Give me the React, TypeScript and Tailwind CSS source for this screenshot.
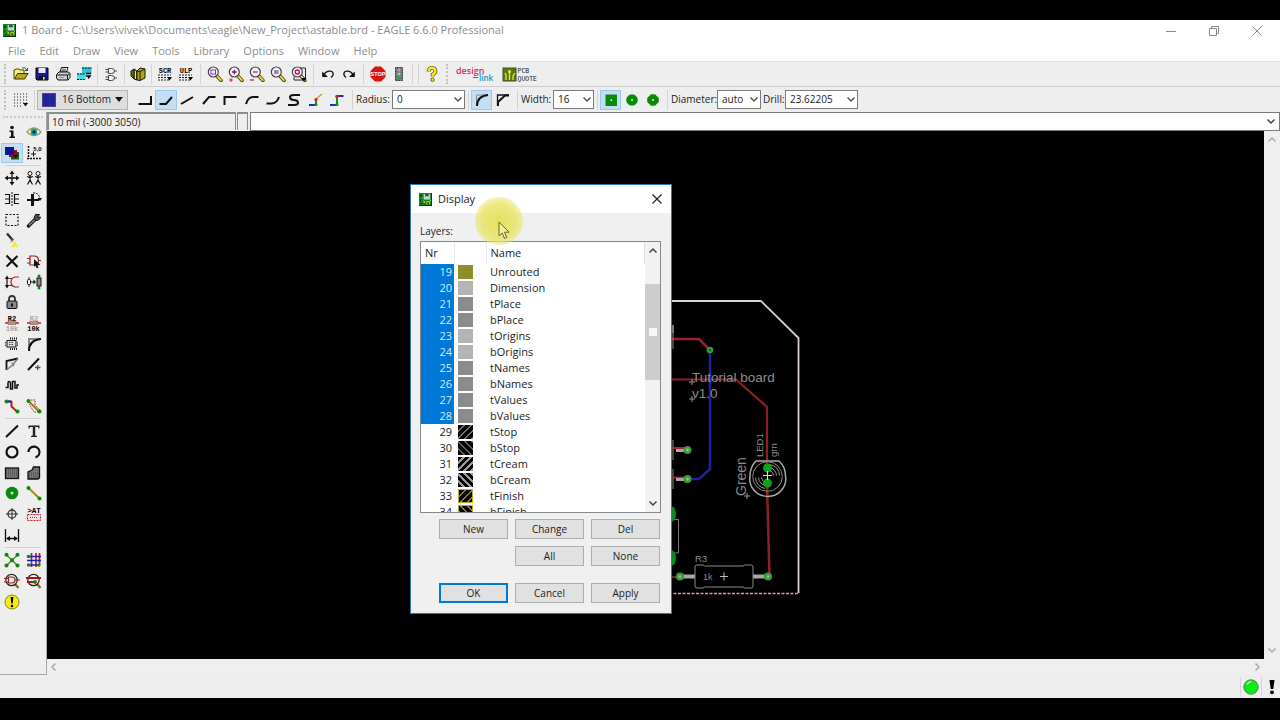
import React from "react";

type IconDef = React.ReactNode;

const INK = "#111111";
const GREEN = "#0a8a0a";

const Magnifier = ({ children }: { children?: React.ReactNode }) => (
  <>
    <path d="M9.500 9.500L14 14.500" stroke="#5a4a00" strokeWidth="3.400" strokeLinecap="round" />
    <path d="M10 10L13.800 14.200" stroke="#f0e040" strokeWidth="1.800" strokeLinecap="round" />
    <circle cx="6.300" cy="6" r="5" fill="#f3f0fa" stroke="#45424f" strokeWidth="1.200" />
    {children}
  </>
);

const icons: Record<string, IconDef> = {
  open: (
    <>
      <path d="M1 13V4h1l1-1h3l1 1h4v3" fill="#f5ec7a" stroke="#4a4200" />
      <path d="M1.500 13L4.500 7.500H15L11.500 13Z" fill="#b5a81c" stroke="#3a3400" />
      <path d="M9 2.500c2-1.500 4-.5 4.500 1.500M14.500 2v2.500h-2.500" fill="none" stroke={INK} strokeWidth=".8" />
    </>
  ),
  save: (
    <>
      <path d="M2 2h12v12H3l-1-1Z" fill="#1a1a9a" stroke="#000" />
      <path d="M4.500 2h7v5h-7Z" fill="#e8e8f4" />
      <path d="M5 10h6.500v4H5Z" fill="#111" />
      <path d="M9 11h1.500v2.500H9Z" fill="#fff" />
    </>
  ),
  print: (
    <>
      <path d="M5 6L6.500 1.500H13L11.500 6Z" fill="#fff" stroke={INK} />
      <path d="M7 3.200h4M6.500 4.700h4" stroke={INK} strokeWidth=".7" />
      <path d="M1.500 8.500L4 6h9.500l1.500 1.500v4l-2 2.500H3L1.500 12Z" fill="#d0d0d0" stroke={INK} />
      <path d="M1.500 9h11v4.500M12.500 9l2-1.500" fill="none" stroke={INK} />
      <path d="M4 11.500h5" stroke="#b8a800" />
    </>
  ),
  cam: (
    <>
      <path d="M6 1.500h9.500v6.500H6Z" fill="#28c4d4" />
      <path d="M1 7.500h9v6H1Z" fill="#40e0ec" />
      <path d="M6 2h9.500M1 8h8M1 13.500h8" stroke="#000" strokeDasharray="2 .8" strokeWidth="1.200" />
      <path d="M10 7.500h5M10 10h4l-2 2.500" fill="none" stroke="#000" strokeWidth="1.500" />
    </>
  ),
  gate: (
    <>
      <path d="M5.500 2.500h3q3 0 3 2.500t-3 2.500h-3ZM5.500 9.500h3q3 0 3 2.500t-3 2.500h-3Z" fill="#f4f4f4" stroke="#444" />
      <path d="M2.500 3.500h3M2.500 6h3M2.500 11h3M2.500 13.500h3M11.500 5h2.500M11.500 12h2.500" stroke="#444" />
    </>
  ),
  books: (
    <>
      <path d="M1 5l3-2 3 2v9l-3-1-3-3Z" fill="#6a6420" stroke="#1a1a00" />
      <path d="M7 5l3-3 5 1v9l-5 2.500-3-.5Z" fill="#b0a224" stroke="#1a1a00" />
      <path d="M4 4v9M10 5v9M7 5l3 .5L15 3" fill="none" stroke="#1a1a00" />
      <path d="M5.500 5v8" stroke="#f0e878" />
    </>
  ),
  scr: (
    <>
      <text x="8" y="6.500" textAnchor="middle" fontSize="7" fontWeight="700" fontFamily="Liberation Mono, monospace">SCR</text>
      <path d="M1 9h13M1 11.500h9M1 14h11" stroke="#222" strokeDasharray="2 1" />
      <path d="M10 11h5l-2.500 3.500Z" fill="#000" />
    </>
  ),
  ulp: (
    <>
      <text x="8" y="6.500" textAnchor="middle" fontSize="7" fontWeight="700" fontFamily="Liberation Mono, monospace">ULP</text>
      <path d="M1 9h13M1 11.500h9M1 14h11" stroke="#222" strokeDasharray="2 1" />
      <path d="M10 11h5l-2.500 3.500Z" fill="#000" />
    </>
  ),
  zoomFit: <Magnifier><rect x="4" y="4" width="4.500" height="4" fill="none" stroke="#8a30c0" /></Magnifier>,
  zoomIn: <Magnifier><path d="M4 6h4.600M6.300 3.700v4.600" stroke="#8a1060" strokeWidth="1.300" /><path d="M1 14h4M3 12v4" stroke="#c02060" /></Magnifier>,
  zoomOut: <Magnifier><path d="M4 6h4.600" stroke="#c02060" strokeWidth="1.300" /><path d="M1 14h4" stroke="#c02060" strokeWidth="1.300" /></Magnifier>,
  zoomRedraw: <Magnifier><path d="M4 5h4.600M4 7h4.600" stroke="#333" /></Magnifier>,
  zoomSelect: (
    <>
      <path d="M9 2h5.500v12H3V11" fill="none" stroke="#222" />
      <Magnifier><circle cx="6.300" cy="6" r="2" fill="none" stroke="#c01040" strokeWidth="1.300" /></Magnifier>
      <path d="M10.500 12h5L13 15.500Z" fill="#000" />
    </>
  ),
  undo: (
    <>
      <path d="M4 9C6 4.500 12 4 13 7c.6 2-.6 3.500-2 4.500" fill="none" stroke={INK} strokeWidth="1.300" />
      <path d="M2.200 5.500V11H8Z" fill={INK} />
    </>
  ),
  redo: (
    <>
      <path d="M12 9C10 4.500 4 4 3 7c-.6 2 .6 3.500 2 4.500" fill="none" stroke={INK} strokeWidth="1.300" />
      <path d="M13.800 5.500V11H8Z" fill={INK} />
    </>
  ),
  stop: (
    <>
      <path d="M5 .5h6L15.500 5v6L11 15.500H5L.5 11V5Z" fill="#e01010" />
      <text x="8" y="10.300" textAnchor="middle" fontSize="5.500" fontWeight="700" fill="#fff" fontFamily="Liberation Sans, sans-serif">STOP</text>
    </>
  ),
  traffic: (
    <>
      <rect x="4.500" y="1.500" width="7" height="13" fill="#777" stroke="#222" strokeDasharray="1 .6" />
      <circle cx="8" cy="4" r="1.600" fill="#aaa" />
      <circle cx="8" cy="8" r="1.600" fill="#bbb" />
      <circle cx="8" cy="12" r="1.800" fill="#1cae3c" />
    </>
  ),
  help: (
    <>
      <path d="M4.500 5.500Q4.500 2 8 2t3.500 3.200Q11.500 7 8.600 8.500V10.500" fill="none" stroke="#3a3400" strokeWidth="3.600" />
      <path d="M4.500 5.500Q4.500 2 8 2t3.500 3.200Q11.500 7 8.600 8.500V10.500" fill="none" stroke="#f6ec20" strokeWidth="2.400" />
      <circle cx="8.500" cy="13.700" r="1.700" fill="#f6ec20" stroke="#3a3400" strokeWidth=".8" />
    </>
  ),
  grid: (
    <>
      <path d="M1 2h13M1 5h13M1 8h13M1 11h13M1 14h9" stroke="#222" strokeDasharray="1 2" />
      <path d="M10 11h5l-2.500 3.500Z" fill="#000" />
    </>
  ),
  bend0: <path d="M1.500 12H14V4" fill="none" stroke={INK} strokeWidth="2" />,
  bend1: <path d="M1.500 12H8L14 5" fill="none" stroke={INK} strokeWidth="2" />,
  bend2: <path d="M2 12L14 5" fill="none" stroke={INK} strokeWidth="2" />,
  bend3: <path d="M2 12L8 5H14.500" fill="none" stroke={INK} strokeWidth="2" />,
  bend4: <path d="M2.500 13V5H14.500" fill="none" stroke={INK} strokeWidth="2" />,
  bend5: <path d="M2 12Q4 5 9 5H14.500" fill="none" stroke={INK} strokeWidth="2" />,
  bend6: <path d="M1.500 11.500H7Q12 11 14 5" fill="none" stroke={INK} strokeWidth="2" />,
  bend7: <path d="M14 3H8Q3.500 3 4 5.500T8 8t4 2.500T8 13H2" fill="none" stroke={INK} strokeWidth="2" />,
  bend8: (
    <>
      <path d="M1 13H7" stroke="#1830c0" strokeWidth="2" />
      <path d="M8 13V7" stroke="#109020" strokeWidth="2" />
      <path d="M8 7L14 2" stroke="#d0a030" strokeWidth="1.600" />
      <circle cx="8" cy="7.500" r="1.600" fill="#d02020" />
      <circle cx="8" cy="12.500" r="1.600" fill="#109020" />
    </>
  ),
  bend9: (
    <>
      <path d="M1 13H8" stroke="#1830c0" strokeWidth="2" />
      <path d="M8 13V4" stroke="#109020" strokeWidth="2" />
      <path d="M8 4H14.500" stroke="#1830c0" strokeWidth="2" />
      <circle cx="8" cy="4.500" r="1.800" fill="#d02020" />
      <circle cx="8" cy="12.500" r="1.600" fill="#109020" />
    </>
  ),
  miterRound: (
    <>
      <path d="M2.500 14V3H14" fill="none" stroke="#888" />
      <path d="M3 14Q3 4 14 3" fill="none" stroke={INK} strokeWidth="2" />
    </>
  ),
  miterFlat: (
    <>
      <path d="M2.500 14V3H14" fill="none" stroke={INK} strokeWidth="1.300" />
      <path d="M3 14V10L10 3.500H14" fill="none" stroke={INK} strokeWidth="2" />
    </>
  ),
  viaSquare: (
    <>
      <rect x="2.500" y="2.500" width="11.500" height="11.500" fill={GREEN} />
      <rect x="7.500" y="7.500" width="1.500" height="1.500" fill="#fff" />
    </>
  ),
  viaRound: (
    <>
      <circle cx="8" cy="8" r="5.800" fill={GREEN} />
      <rect x="7.200" y="7.200" width="1.600" height="1.600" fill="#fff" />
    </>
  ),
  viaOct: (
    <>
      <path d="M6 2.200h4L13.800 6v4L10 13.800H6L2.200 10V6Z" fill={GREEN} />
      <rect x="7.200" y="7.200" width="1.600" height="1.600" fill="#fff" />
    </>
  ),
  info: (
    <>
      <circle cx="8" cy="3.500" r="1.800" fill={INK} />
      <path d="M5.500 6.500H9.500V12.500H11V14H5.500V12.500H7V8H5.500Z" fill={INK} />
    </>
  ),
  eye: (
    <>
      <path d="M1 8Q8 0 15 8Q8 15 1 8Z" fill="#fff" stroke="#a89a50" strokeWidth="1.400" />
      <circle cx="8" cy="8" r="3.400" fill="#10a0a8" />
      <circle cx="8" cy="8" r="1.500" fill="#002030" />
    </>
  ),
  display: (
    <>
      <path d="M7 7h8v7.500H7Z" fill="#0e5a24" />
      <path d="M5 5h8v7H5Z" fill="#8a1414" />
      <path d="M1 2h9v8H1Z" fill="#14148c" />
      <path d="M9 10h5l-2.500 3Z" fill="#200" />
    </>
  ),
  mark: (
    <>
      <path d="M2.500 1v13M1 13.500h14" stroke={INK} strokeDasharray="2 1" strokeWidth="1.500" />
      <path d="M5 9h5M7.500 6.500v5" stroke={INK} />
      <text x="11.500" y="6" textAnchor="middle" fontSize="6" fontWeight="700" fontFamily="Liberation Sans, sans-serif">5,0</text>
    </>
  ),
  move: (
    <>
      <path d="M8 2v12M2 8h12" stroke={INK} strokeWidth="1.300" />
      <path d="M8 .5L10.500 4h-5ZM8 15.500L5.500 12h5ZM.5 8L4 5.500v5ZM15.500 8L12 10.500v-5Z" fill={INK} />
    </>
  ),
  copy: (
    <>
      <path d="M4 6v4M1 6.500l3 1 3-1M4 10l-2.500 4.500M4 10l2.500 4.500M12 6v4M9 6.500l3 1 3-1M12 10l-2.500 4.500M12 10l2.500 4.500" fill="none" stroke={INK} strokeWidth="1.200" />
      <circle cx="4" cy="3.500" r="2" fill="#fff" stroke={INK} />
      <circle cx="12" cy="3.500" r="2" fill="#fff" stroke={INK} />
    </>
  ),
  mirror: (
    <>
      <path d="M8 1v14" stroke={INK} strokeDasharray="2 1" />
      <path d="M1 3.500h4.500v9H1M1 8h4.500M15 3.500h-4.500v9H15M15 8h-4.500" fill="none" stroke={INK} strokeWidth="1.200" />
    </>
  ),
  rotate: (
    <>
      <path d="M6.500 3v12" stroke={INK} strokeWidth="3" />
      <path d="M1 9h12" stroke={INK} strokeWidth="2" />
      <path d="M7 2Q13 1.500 14 8" fill="none" stroke={INK} strokeDasharray="2 1" />
      <path d="M11.500 7h4.500l-2 3Z" fill={INK} />
    </>
  ),
  group: <rect x="2" y="2.500" width="12" height="11" fill="none" stroke={INK} strokeDasharray="2 1.500" strokeWidth="1.200" />,
  wrench: (
    <>
      <path d="M2.500 14L9 7.500" stroke={INK} strokeWidth="3.400" strokeLinecap="round" />
      <path d="M2.800 13.600L9 7.500" stroke="#888" strokeWidth="1.400" />
      <path d="M13.500 2.500L11.500 5.500L14.500 5Q13.500 9 9.500 8.500Q7 5.500 9.500 2.500Z" fill="#555" stroke={INK} />
    </>
  ),
  brush: (
    <>
      <path d="M3 1.500L9 8.500" stroke="#333" strokeWidth="2.400" />
      <path d="M8.500 7L11 9.500L14.500 15H6.500L9 12Z" fill="#f2ea40" />
      <path d="M6.500 10L10 7" stroke="#555" />
    </>
  ),
  del: <path d="M2.500 2.500L13.500 14M13.500 3L2.500 13.500" stroke={INK} strokeWidth="2.200" />,
  add: (
    <>
      <path d="M4 3h4q4.500 0 4.500 4.500T8 12H4ZM1 5.500h3M1 10h3M12 7.500h3" fill="none" stroke="#902020" strokeWidth="1.200" />
      <path d="M8 6l6.500 6-3 .3 1 3-2-.3-1-2.500L8 14Z" fill={INK} />
    </>
  ),
  pinswap: (
    <>
      <path d="M15 3H11Q7 4 7 8t4 5h4M5 4.500h4M5 11.500h4" fill="none" stroke="#a02020" strokeWidth="1.200" />
      <path d="M3 4v8" stroke={INK} strokeWidth="1.200" />
      <path d="M3 1.500L5.200 5H.8ZM3 14.500L.8 11h4.400Z" fill={INK} />
    </>
  ),
  replace: (
    <>
      <path d="M3 3v10M13 2v12" stroke="#333" />
      <rect x="1.500" y="5.500" width="3" height="5" rx="1" fill="#fff" stroke={INK} />
      <rect x="11" y="4" width="4" height="8" fill="#8a8a8a" stroke={INK} />
      <path d="M5 8h3" stroke={GREEN} strokeWidth="1.500" />
      <path d="M7.500 5.500v5L10 8Z" fill={INK} />
      <circle cx="13" cy="2" r="1.500" fill={GREEN} />
      <circle cx="13" cy="14" r="1.500" fill={GREEN} />
    </>
  ),
  lock: (
    <>
      <path d="M5 8V5q0-3 3-3t3 3v3" fill="none" stroke="#333" strokeWidth="1.800" />
      <rect x="3" y="7" width="10" height="7.500" rx="1" fill="#888" stroke={INK} />
      <path d="M8 9.500v3" stroke="#000" strokeWidth="1.800" />
    </>
  ),
  name: (
    <>
      <text x="8" y="6" textAnchor="middle" fontSize="7" fontWeight="700" fontFamily="Liberation Mono, monospace">R2</text>
      <path d="M1 8h14" stroke="#c02030" strokeWidth="1.500" />
      <rect x="4" y="6.700" width="8" height="2.800" fill="#999" stroke="#a03030" strokeWidth=".5" />
      <text x="8" y="15.500" textAnchor="middle" fontSize="7" fill="#888" fontFamily="Liberation Mono, monospace">10k</text>
    </>
  ),
  value: (
    <>
      <text x="8" y="6" textAnchor="middle" fontSize="7" fill="#888" fontFamily="Liberation Mono, monospace">R2</text>
      <path d="M1 8h14" stroke="#c02030" strokeWidth="1.500" />
      <rect x="4" y="6.700" width="8" height="2.800" fill="#999" stroke="#a03030" strokeWidth=".5" />
      <text x="7.500" y="15.500" textAnchor="middle" fontSize="7" fontWeight="700" fontFamily="Liberation Mono, monospace">10k</text>
    </>
  ),
  smash: (
    <>
      <rect x="3" y="4.500" width="9" height="6.500" fill="#ddd" stroke={INK} />
      <path d="M6 2.500h7M6 13h7" stroke={INK} strokeWidth="2" strokeDasharray="1 1" />
      <path d="M5 6.500h5M5 8.500h5M1.500 6v4M13.500 6v4" stroke="#444" strokeDasharray="1.500 1" />
    </>
  ),
  miter: (
    <>
      <path d="M3 14V3H15" fill="none" stroke="#888" strokeWidth="2" />
      <path d="M3 15Q3 4 15 3" fill="none" stroke={INK} strokeWidth="2" />
    </>
  ),
  split: (
    <>
      <path d="M2.500 14V5L14 2.500" fill="none" stroke={INK} strokeWidth="1.800" />
      <path d="M2.500 14L8 9.500L14 2.500" fill="none" stroke="#777" strokeWidth="1.500" />
      <path d="M7 6l2 5 2-3Z" fill="#888" />
    </>
  ),
  optimize: (
    <>
      <path d="M2 14L13 2.500" stroke={INK} strokeWidth="2" />
      <path d="M9 11.500h5.500M11.700 9v5" stroke="#555" strokeWidth="1.300" />
    </>
  ),
  meander: <path d="M1.500 10.500H4V6Q4 4.500 5 4.500T6.500 6V12H8.500V4.500H11V11H13V8H15" fill="none" stroke={INK} strokeWidth="1.500" />,
  route: (
    <>
      <path d="M2 3.500H7.500" stroke="#1428b0" strokeWidth="2.400" />
      <path d="M7.500 3v5.500L13.500 14" fill="none" stroke="#c41818" strokeWidth="2" />
      <circle cx="2.500" cy="3.500" r="2" fill={GREEN} />
      <circle cx="13.500" cy="13.500" r="2" fill={GREEN} />
    </>
  ),
  ripup: (
    <>
      <path d="M2.500 3L13.500 14" stroke="#8a7a10" strokeWidth="1.800" />
      <path d="M5 2h4v5l5 5M3 6l5 8h5" fill="none" stroke="#a02828" strokeDasharray="1.500 1" />
      <circle cx="2.500" cy="3" r="2" fill={GREEN} />
      <circle cx="13.500" cy="13.500" r="2" fill={GREEN} />
    </>
  ),
  wire: <path d="M2 14L14 2.500" stroke={INK} strokeWidth="2" />,
  text: <path d="M2.500 2.500H13.500V5.500H12.500L12 4H9.200V12.500L11 13V14H5V13L6.800 12.500V4H4L3.500 5.500H2.500Z" fill="#222" />,
  circle: <circle cx="8" cy="8" r="5.500" fill="none" stroke={INK} strokeWidth="2.200" />,
  arc: <path d="M2.500 8A5.500 5.500 0 1 1 9.500 13.400" fill="none" stroke={INK} strokeWidth="2.200" />,
  rect: (
    <>
      <rect x="1.500" y="3" width="13" height="10.500" fill="#777" stroke={INK} strokeWidth="1.300" />
      <path d="M2 5h12M2 7h12M2 9h12M2 11h12" stroke="#444" strokeDasharray="1 1" />
    </>
  ),
  polygon: (
    <>
      <path d="M2 14V7L6 5L7.500 2H13.500V13L12 14Z" fill="#777" stroke={INK} strokeWidth="1.300" />
      <path d="M3 8h10M3 10h10M3 12h10M7 5h6" stroke="#444" strokeDasharray="1 1" />
    </>
  ),
  via: (
    <>
      <circle cx="8" cy="8" r="6.300" fill={GREEN} />
      <circle cx="8" cy="8" r="1.500" fill="#d8f0d8" />
    </>
  ),
  signal: (
    <>
      <path d="M2.500 3L14 14" stroke="#9a8a18" strokeWidth="1.800" />
      <circle cx="2.500" cy="3" r="2" fill={GREEN} />
      <circle cx="13.500" cy="13.500" r="2" fill={GREEN} />
    </>
  ),
  hole: (
    <>
      <circle cx="8" cy="8" r="4" fill="none" stroke="#333" strokeWidth="1.300" />
      <path d="M8 2v12M2 8h12" stroke="#333" />
    </>
  ),
  attribute: (
    <>
      <text x="8" y="7" textAnchor="middle" fontSize="7.500" fontWeight="700" fontFamily="Liberation Mono, monospace">&gt;AT</text>
      <rect x="1.500" y="8.500" width="13" height="6" fill="#f8e0e0" stroke="#c02030" strokeDasharray="2 1" />
      <path d="M4 11.500h8" stroke="#c02030" strokeDasharray="1 1" />
    </>
  ),
  dimension: (
    <>
      <path d="M1.500 2v13M14.500 2v13M3 11.500h10" stroke={INK} strokeWidth="1.300" />
      <path d="M2 11.500L6 9v5ZM14 11.500L10 9v5Z" fill={INK} />
    </>
  ),
  ratsnest: (
    <>
      <path d="M2 2.500L14 14M14 2.500L2 14" stroke="#5a8a20" strokeWidth="1.500" />
      <circle cx="2.500" cy="2.800" r="2" fill={GREEN} />
      <circle cx="13.500" cy="2.800" r="2" fill={GREEN} />
      <circle cx="8" cy="8.200" r="2" fill={GREEN} />
      <circle cx="2.500" cy="13.500" r="2" fill={GREEN} />
      <circle cx="13.500" cy="13.500" r="2" fill={GREEN} />
    </>
  ),
  auto: (
    <>
      <path d="M5.500 1v14M10 1v14M13.500 1v11" stroke="#c01838" strokeWidth="1.700" />
      <path d="M1 4.500h14M1 8.500h14M2 13h11" stroke="#1424b0" strokeWidth="1.700" />
      <circle cx="2.500" cy="4.500" r="1.700" fill={GREEN} />
      <circle cx="2.500" cy="13" r="1.700" fill={GREEN} />
      <circle cx="13" cy="13" r="1.700" fill={GREEN} />
    </>
  ),
  erc: (
    <>
      <path d="M10.500 10.500l4 4.500" stroke="#8a6a20" strokeWidth="2.400" />
      <circle cx="7.500" cy="7" r="5.700" fill="#f4ecec" stroke="#222" strokeWidth="1.200" />
      <path d="M0 5.500h4M0 9h4M4.500 4h3q3.500 0 3.500 3t-3.500 3h-3ZM11 7h5" fill="none" stroke="#902020" strokeWidth="1.200" />
    </>
  ),
  drc: (
    <>
      <path d="M10.500 10.500l4 4.500" stroke="#8a6a20" strokeWidth="2.400" />
      <circle cx="7.500" cy="7" r="5.700" fill="#f4ecec" stroke="#222" strokeWidth="1.200" />
      <path d="M0 5h15M1 9h7" stroke="#a01818" strokeWidth="1.900" />
      <circle cx="9" cy="9" r="1.900" fill={GREEN} />
    </>
  ),
  errors: (
    <>
      <circle cx="8" cy="8" r="7" fill="#f6ee10" stroke="#8a8410" />
      <path d="M6.600 3h2.800L8.700 9.500H7.300Z" fill="#000" />
      <circle cx="8" cy="12" r="1.300" fill="#000" />
    </>
  ),
};

function Icon({ name }: { name: string }) {
  return (
    <svg viewBox="0 0 16 16" className="size-4 shrink-0" aria-hidden="true">
      {icons[name]}
    </svg>
  );
}

function ToolButton({ name, active = false }: { name: string; active?: boolean }) {
  return (
    <button
      type="button"
      aria-label={name}
      className={
        active
          ? "flex h-5 w-full items-center justify-center border border-[#9cc8ea] bg-[#c4dff4]"
          : "flex h-5 w-full items-center justify-center"
      }
    >
      <Icon name={name} />
    </button>
  );
}

function ToolGroup({ names, active }: { names: string[]; active?: string }) {
  return (
    <div className="flex shrink-0">
      {names.map((n) => (
        <div key={n} className="w-[21px]">
          <ToolButton name={n} active={n === active} />
        </div>
      ))}
    </div>
  );
}

function Sep({ wide = false }: { wide?: boolean }) {
  return (
    <div className={wide ? "flex w-2 shrink-0 justify-center" : "flex w-1.5 shrink-0 justify-center"}>
      <div className="h-5 w-px bg-[#d4d4d4]" />
    </div>
  );
}

function Handle() {
  return (
    <div className="flex w-2.5 shrink-0 justify-center">
      <div className="h-5 border-l-2 border-dotted border-[#c0c0c0]" />
    </div>
  );
}

function Chevron({ className, dir = "down" }: { className: string; dir?: "down" | "up" | "left" | "right" }) {
  const d = {
    down: "M1.500 3.500L5 7L8.500 3.500",
    up: "M1.500 6.500L5 3L8.500 6.500",
    left: "M6.500 1.500L3 5L6.500 8.500",
    right: "M3.500 1.500L7 5L3.500 8.500",
  }[dir];
  return (
    <svg viewBox="0 0 10 10" className={className} aria-hidden="true">
      <path d={d} fill="none" stroke="currentColor" strokeWidth="1.500" />
    </svg>
  );
}

function Combo({ id, label, value, labelClass, boxClass }: { id: string; label: string; value: string; labelClass: string; boxClass: string }) {
  return (
    <div className="flex shrink-0 items-center">
      <label htmlFor={id} className={labelClass}>{label}</label>
      <div className={boxClass}>
        <select id={id} className="h-full w-full appearance-none border border-[#7a7a7a] bg-white pl-1 outline-none">
          <option>{value}</option>
        </select>
        <Chevron className="pointer-events-none absolute top-1 right-0.5 size-2.5 text-[#555]" />
      </div>
    </div>
  );
}

function BoardLogo({ className }: { className: string }) {
  return (
    <svg viewBox="0 0 14 14" className={className} aria-hidden="true">
      <rect width="14" height="14" fill="#108420" />
      <path d="M0 13h14v1H0ZM13 0h1v14h-1Z" fill="#053808" />
      <path d="M1 2h2v2H1ZM1 7h1v2H1ZM2 11h2v1H2Z" fill="#054008" />
      <path d="M5 1h7v6H5Z" fill="#c8d4cc" />
      <path d="M6.500 1h4v2.500h-4Z" fill="#3a4a40" />
      <path d="M5 9h1.500v1.500H5ZM8 9h4v3.500H8Z" fill="#e0d820" />
      <path d="M9 10h2v2.500H9Z" fill="#064010" />
      <path d="M3 5h1v1H3ZM4 8h1v1H4ZM12 7.500h1v1h-1Z" fill="#70f070" />
    </svg>
  );
}

const menu = ["File", "Edit", "Draw", "View", "Tools", "Library", "Options", "Window", "Help"];

const sideGroups = [
  { box: "grid h-[42px] grid-cols-2", items: ["info", "eye", "display", "mark"] },
  {
    box: "grid h-[248px] grid-cols-2",
    items: [
      "move", "copy", "mirror", "rotate", "group", "wrench", "brush", "", "del", "add", "pinswap", "replace",
      "lock", "", "name", "value", "smash", "miter", "split", "optimize", "meander", "", "route", "ripup",
    ],
  },
  {
    box: "grid h-[124px] grid-cols-2",
    items: ["wire", "text", "circle", "arc", "rect", "polygon", "via", "signal", "hole", "attribute", "dimension", ""],
  },
  { box: "grid h-[62px] grid-cols-2", items: ["ratsnest", "auto", "erc", "drc", "errors", ""] },
];

function Sidebar() {
  return (
    <aside className="flex w-[47px] shrink-0 flex-col border-r border-b border-[#a8a8a8] bg-[#eeeeee] pr-px pl-px">
      <div className="mx-0.5 h-[9px] pt-1">
        <div className="border-t-2 border-dotted border-[#c8c8c8]" />
      </div>
      {sideGroups.map((g, i) => (
        <React.Fragment key={i}>
          {i > 0 && (
            <div className="h-[5px] px-1 pt-0.5">
              <div className="h-px bg-[#cfcfcf]" />
            </div>
          )}
          <div className={g.box}>
            {g.items.map((n, k) => (
              <div key={k} className="flex items-center">
                {n !== "" && <ToolButton name={n} active={n === "display"} />}
              </div>
            ))}
          </div>
        </React.Fragment>
      ))}
    </aside>
  );
}

function Board() {
  return (
    <svg viewBox="660 295 145 305" className="absolute top-[164px] left-[613px] h-[305px] w-[145px]" fontFamily="Liberation Sans, Arial, sans-serif">
      <path d="M660 301H761L798.500 338V593" fill="none" stroke="#d8ccd0" strokeWidth="1.800" />
      <path d="M660 593.500H799" stroke="#d0a0a8" strokeWidth="1.300" strokeDasharray="3 1.500" />
      <path d="M660 339H699L710 350" fill="none" stroke="#9c2028" strokeWidth="2.500" />
      <path d="M660 379.500H736L767 407V468" fill="none" stroke="#8c2024" strokeWidth="2.200" />
      <path d="M767 484L769.500 577" stroke="#8c2024" strokeWidth="2.500" />
      <path d="M710 350V469L699 479H688" fill="none" stroke="#22229a" strokeWidth="2.500" />
      <path d="M673 325v24M673 440v20M673 469v20" stroke="#888" />
      <rect x="670" y="325" width="4" height="8" fill="#6a7a80" />
      <path d="M672 448H686M672 477.500H686" stroke="#a03030" strokeWidth="2" />
      <path d="M676 450.500H688M676 479.500H688" stroke="#a8a8a8" strokeWidth="3" />
      <path d="M660 519.500H678.500V553H660" fill="none" stroke="#777" />
      <ellipse cx="672" cy="514" rx="4" ry="7.500" fill="#0a8a26" />
      <ellipse cx="672" cy="558" rx="4" ry="7.500" fill="#0a8a26" />
      <path d="M660 577H680" stroke="#a03020" strokeWidth="1.500" />
      <path d="M680 576.500H695M753 576.500H768" stroke="#a8a8a8" strokeWidth="4" />
      <path d="M697 565H703L704.500 566H743L744.500 565H751Q753 565 753 567V586Q753 588 751 588H744.500L743 587H704.500L703 588H697Q695 588 695 586V567Q695 565 697 565Z" fill="#000" stroke="#8a8a8a" />
      <path d="M720 576.500h8M724 572.500v8" stroke="#bbb" />
      <g fill="#3c9c3c">
        <circle cx="710" cy="350" r="3.300" />
        <circle cx="687.500" cy="450" r="4" />
        <circle cx="687.500" cy="479" r="4" />
        <circle cx="680" cy="576.500" r="4" />
        <circle cx="768" cy="576.500" r="4" />
      </g>
      <circle cx="710" cy="350" r="1.200" fill="#186018" />
      <circle cx="687.500" cy="450" r="1.500" fill="#8cc08c" />
      <circle cx="687.500" cy="479" r="1.500" fill="#8cc08c" />
      <circle cx="680" cy="576.500" r="1.500" fill="#8cc08c" />
      <circle cx="768" cy="576.500" r="1.500" fill="#8cc08c" />
      <path d="M756 461H779Q785.500 467 785.500 476A18 17.500 0 1 1 750 476Q750 467 756 461Z" fill="none" stroke="#aaa" strokeWidth="1.500" />
      <circle cx="767.500" cy="476.500" r="14.800" fill="none" stroke="#888" />
      <path d="M770 464.500q9 2 9.500 11M770 467.500q6 2 6.500 8M770 470.500q3 1 3.500 5M765 488.500q-9-2-9.500-11M765 485.500q-6-2-6.500-8M765 482.500q-3-1-3.500-5" fill="none" stroke="#999" />
      <circle cx="767.500" cy="468" r="4.500" fill="#0fa020" />
      <circle cx="767.500" cy="483" r="4.500" fill="#0fa020" />
      <path d="M763 475.500h9M767.500 471v9" stroke="#ddd" />
      <g fill="#8c8c8c">
        <text x="692" y="381.500" fontSize="13.500">Tutorial board</text>
        <text x="692" y="398" fontSize="13.500">v1.0</text>
        <text x="695" y="562" fontSize="9.500">R3</text>
        <text x="703" y="580" fontSize="9">1k</text>
        <text transform="translate(763 457) rotate(-90)" fontSize="9.500">LED1</text>
        <text transform="translate(777 457) rotate(-90)" fontSize="9.500">grn</text>
        <text transform="translate(746 496) rotate(-90)" fontSize="14">Green</text>
      </g>
      <path d="M689 382h6M692 379v6M689 399h6M692 396v6M744 496h6M747 493v6" stroke="#999" />
    </svg>
  );
}

const layers = [
  { nr: 19, name: "Unrouted", swatch: "bg-[#8c8f28]" },
  { nr: 20, name: "Dimension", swatch: "bg-[#b4b4b4]" },
  { nr: 21, name: "tPlace", swatch: "bg-[#8c8c8c]" },
  { nr: 22, name: "bPlace", swatch: "bg-[#8c8c8c]" },
  { nr: 23, name: "tOrigins", swatch: "bg-[#b4b4b4]" },
  { nr: 24, name: "bOrigins", swatch: "bg-[#b4b4b4]" },
  { nr: 25, name: "tNames", swatch: "bg-[#8c8c8c]" },
  { nr: 26, name: "bNames", swatch: "bg-[#8c8c8c]" },
  { nr: 27, name: "tValues", swatch: "bg-[#8c8c8c]" },
  { nr: 28, name: "bValues", swatch: "bg-[#8c8c8c]" },
  { nr: 29, name: "tStop", swatch: "bg-[repeating-linear-gradient(135deg,#000_0px,#000_4px,#777_4px,#777_5px)]" },
  { nr: 30, name: "bStop", swatch: "bg-[repeating-linear-gradient(45deg,#000_0px,#000_4px,#666_4px,#666_5px)]" },
  { nr: 31, name: "tCream", swatch: "bg-[repeating-linear-gradient(135deg,#000_0px,#000_3px,#999_3px,#999_5px)]" },
  { nr: 32, name: "bCream", swatch: "bg-[repeating-linear-gradient(45deg,#000_0px,#000_3px,#999_3px,#999_5px)]" },
  { nr: 33, name: "tFinish", swatch: "border border-[#b8b020] bg-[repeating-linear-gradient(135deg,#000_0px,#000_4px,#88822a_4px,#88822a_5px)]" },
  { nr: 34, name: "bFinish", swatch: "border border-[#b8b020] bg-[repeating-linear-gradient(45deg,#000_0px,#000_4px,#88822a_4px,#88822a_5px)]" },
];

function DialogButton({ label, primary = false }: { label: string; primary?: boolean }) {
  return (
    <button
      type="button"
      className={
        primary
          ? "flex h-5 items-center justify-center border-2 border-[#0078d7] bg-[#e1e1e1]"
          : "flex h-5 items-center justify-center border border-[#adadad] bg-[#e1e1e1]"
      }
    >
      {label}
    </button>
  );
}

function DisplayDialog() {
  return (
    <section role="dialog" aria-label="Display" className="absolute top-[53px] left-[363px] flex w-[262px] flex-col border border-[#2f78b8] bg-[#f0f0f0] text-[10px] text-[#1c1c1c]">
      <header className="flex h-7 items-center bg-white pr-1.5 pl-2">
        <BoardLogo className="size-[13px]" />
        <h2 className="ml-1.5 grow text-[11px]">Display</h2>
        <button type="button" aria-label="Close" className="flex size-4 items-center justify-center">
          <svg viewBox="0 0 12 12" className="size-3"><path d="M1.500 1.500L10.500 10.500M10.500 1.500L1.500 10.500" stroke="#222" strokeWidth="1.200" /></svg>
        </button>
      </header>
      <div className="flex flex-col pr-2.5 pb-2.5 pl-[9px]">
        <div className="flex h-7 items-end pb-0.5 leading-4">Layers:</div>
        <div className="flex h-[272px] overflow-hidden border border-[#828790] bg-white">
          <div className="grow overflow-hidden">
            <table className="w-full table-fixed border-collapse text-[11px] leading-4">
              <thead>
                <tr className="h-[22px]">
                  <th scope="col" className="w-[33px] border-r border-[#ececec] pl-1 text-left font-normal">Nr</th>
                  <th scope="col" className="w-8 border-r border-[#ececec]" />
                  <th scope="col" className="border-r border-[#e0e0e0] pl-1 text-left font-normal">Name</th>
                </tr>
              </thead>
              <tbody>
                {layers.map((l) => (
                  <tr key={l.nr} className="h-4">
                    <td className={l.nr < 29 ? "bg-[#0078d7] p-0 pr-0.5 text-right text-[#d4ecff]" : "p-0 pr-0.5 text-right"}>{l.nr}</td>
                    <td className="py-0 pr-0 pl-1">
                      <div className={`h-3.5 w-[15px] ${l.swatch}`} />
                    </td>
                    <td className="py-0 pr-0 pl-1">{l.name}</td>
                  </tr>
                ))}
              </tbody>
            </table>
          </div>
          <div className="flex w-[15px] shrink-0 flex-col items-center bg-[#f2f2f2]">
            <Chevron dir="up" className="mt-1 size-2.5 text-[#444]" />
            <div className="mt-7 flex h-24 w-full items-center justify-center bg-[#cdcdcd]">
              <div className="size-2 bg-[#f6f6f6]" />
            </div>
            <Chevron className="mt-auto mb-1 size-2.5 text-[#444]" />
          </div>
        </div>
        <div className="mt-1.5 mr-px ml-[19px] grid grid-cols-3 gap-[7px]">
          <DialogButton label="New" />
          <DialogButton label="Change" />
          <DialogButton label="Del" />
          <span />
          <DialogButton label="All" />
          <DialogButton label="None" />
        </div>
        <div className="mt-[17px] mr-px ml-[19px] grid grid-cols-3 gap-[7px]">
          <DialogButton label="OK" primary />
          <DialogButton label="Cancel" />
          <DialogButton label="Apply" />
        </div>
      </div>
      <div className="pointer-events-none absolute top-3 left-16 size-12 rounded-full bg-[radial-gradient(circle,#e6e04ce0_0%,#e8e25cc8_50%,#f0ec9060_82%,transparent_100%)]" />
      <svg viewBox="0 0 12 20" className="pointer-events-none absolute top-9 left-[87px] h-5 w-3" aria-hidden="true">
        <path d="M1 1V15L4.200 12L6.500 17.500L8.800 16.500L6.500 11.200H11Z" fill="#f2eea0" stroke="#6a6630" />
      </svg>
    </section>
  );
}

export default function App() {
  return (
    <div className="flex h-screen min-h-[720px] flex-col bg-black pt-5 pb-[22px] font-['Open_Sans','Noto_Sans',sans-serif] text-[10px] text-[#222]">
      <header className="flex h-[21px] shrink-0 items-center bg-white pl-[3px]">
        <BoardLogo className="size-[13px]" />
        <h1 className="ml-1.5 grow text-[11px] text-[#8c8c8c]">1 Board - C:\Users\vivek\Documents\eagle\New_Project\astable.brd - EAGLE 6.6.0 Professional</h1>
        <div className="flex pr-0.5 text-[#8a8a8a]">
          <button type="button" aria-label="Minimize" className="flex w-[43px] justify-center">
            <svg viewBox="0 0 12 12" className="size-3"><path d="M1 6.500h10" stroke="currentColor" /></svg>
          </button>
          <button type="button" aria-label="Restore" className="flex w-[43px] justify-center">
            <svg viewBox="0 0 12 12" className="size-3"><path d="M1.500 3.500h7v7h-7ZM3.500 3.500v-2h7v7h-2" fill="none" stroke="currentColor" /></svg>
          </button>
          <button type="button" aria-label="Close" className="flex w-[43px] justify-center">
            <svg viewBox="0 0 12 12" className="size-3"><path d="M1.500 1.500L10.500 10.500M10.500 1.500L1.500 10.500" stroke="currentColor" /></svg>
          </button>
        </div>
      </header>
      <nav className="flex h-5 shrink-0 items-center gap-3.5 bg-white pl-2 text-[11px] text-[#8c8c8c]">
        {menu.map((m) => (
          <button key={m} type="button">{m}</button>
        ))}
      </nav>

      <div className="flex h-[26px] shrink-0 items-center border-t border-b border-t-[#e2e2e2] border-b-[#cccccc] bg-[#eeeeee]">
        <Handle />
        <ToolGroup names={["open", "save", "print", "cam"]} />
        <Sep />
        <ToolGroup names={["gate"]} />
        <Sep />
        <ToolGroup names={["books"]} />
        <Sep />
        <ToolGroup names={["scr", "ulp"]} />
        <Sep wide />
        <ToolGroup names={["zoomFit", "zoomIn", "zoomOut", "zoomRedraw", "zoomSelect"]} />
        <Sep wide />
        <ToolGroup names={["undo", "redo"]} />
        <Sep wide />
        <ToolGroup names={["stop", "traffic"]} />
        <Sep />
        <Sep />
        <ToolGroup names={["help"]} />
        <Handle />
        <button type="button" aria-label="design link" className="ml-1 shrink-0">
          <svg viewBox="0 0 40 22" className="h-[22px] w-10" fontFamily="Open Sans, sans-serif" fontWeight="600">
            <text x="0" y="11" fontSize="9" fill="#d0305c">design</text>
            <text x="23" y="18" fontSize="8" fill="#2090b8">link</text>
            <path d="M17 14.500h5" stroke="#d0305c" />
          </svg>
        </button>
        <button type="button" aria-label="PCB quote" className="ml-1.5 shrink-0">
          <svg viewBox="0 0 36 16" className="h-4 w-9" fontFamily="Liberation Mono, monospace">
            <rect x="1" y="2" width="13" height="13" fill="#5a7a10" stroke="#3a5020" />
            <path d="M4 14V9L3 7M7.500 14V6M11 14V10L13 7" fill="none" stroke="#e8e840" strokeWidth="1.300" />
            <circle cx="7.500" cy="5.500" r="1.500" fill="#e8e840" />
            <text x="15.500" y="7" fontSize="6.500" fill="#222">PCB</text>
            <text x="15.500" y="15" fontSize="6.500" fill="#222">QUOTE</text>
          </svg>
        </button>
      </div>

      <div className="flex h-[25px] shrink-0 items-center bg-[#eeeeee]">
        <Handle />
        <ToolGroup names={["grid"]} />
        <Sep />
        <button type="button" className="flex h-5 w-[91px] shrink-0 items-center border border-[#b4b4b4] bg-[#dedede] pl-1">
          <span className="size-3.5 border border-[#4a4a80] bg-[#22229a]" />
          <span className="ml-1.5 grow text-left whitespace-nowrap">16 Bottom</span>
          <svg viewBox="0 0 8 5" className="mr-1 h-[5px] w-2" aria-hidden="true"><path d="M0 0h8L4 5Z" fill="#111" /></svg>
        </button>
        <div className="ml-1.5 grid w-[214px] shrink-0 grid-cols-10">
          {["bend0", "bend1", "bend2", "bend3", "bend4", "bend5", "bend6", "bend7", "bend8", "bend9"].map((n) => (
            <ToolButton key={n} name={n} active={n === "bend1"} />
          ))}
        </div>
        <Sep wide />
        <Combo id="radius" label="Radius:" value="0" labelClass="w-9" boxClass="relative h-[19px] w-[73px]" />
        <Sep />
        <ToolGroup names={["miterRound", "miterFlat"]} active="miterRound" />
        <Sep wide />
        <Combo id="width" label="Width:" value="16" labelClass="w-8" boxClass="relative h-[19px] w-[41px]" />
        <Sep />
        <ToolGroup names={["viaSquare", "viaRound", "viaOct"]} active="viaSquare" />
        <Sep wide />
        <Combo id="diameter" label="Diameter:" value="auto" labelClass="w-[46px]" boxClass="relative h-[19px] w-11" />
        <Combo id="drill" label="Drill:" value="23.62205" labelClass="w-6 pl-0.5" boxClass="relative h-[19px] w-[73px]" />
      </div>

      <div className="flex min-h-0 grow">
        <Sidebar />
        <main className="flex min-w-0 grow flex-col">
          <div className="flex h-[19px] shrink-0 bg-[#eeeeee]">
            <output className="flex h-[18px] w-[189px] shrink-0 items-center border-t-2 border-r border-l-2 border-[#8c8c8c] pl-[3px] whitespace-nowrap">10 mil (-3000 3050)</output>
            <div className="mr-0.5 ml-px h-[18px] w-[11px] shrink-0 border-t-2 border-r border-l border-[#8c8c8c]" />
            <div className="relative grow">
              <input aria-label="Command" className="block h-[19px] w-full border border-[#7a7a7a] bg-white px-1 outline-none" />
              <Chevron className="pointer-events-none absolute top-1 right-1 size-2.5 text-[#444]" />
            </div>
          </div>
          <div className="flex min-h-0 grow">
            <div className="relative min-w-0 grow overflow-hidden bg-black">
              <Board />
              <DisplayDialog />
            </div>
            <div className="flex w-4 shrink-0 flex-col items-center justify-between bg-[#efefef] py-1 text-[#a8a8a8]">
              <Chevron dir="up" className="size-2.5" />
              <Chevron className="size-2.5" />
            </div>
          </div>
          <div className="flex h-4 shrink-0 items-center justify-between bg-[#efefef] pr-[18px] pl-0.5 text-[#a8a8a8]">
            <Chevron dir="left" className="size-2.5" />
            <Chevron dir="right" className="size-2.5" />
          </div>
        </main>
      </div>

      <footer className="flex h-[23px] shrink-0 items-center justify-end bg-[#eeeeee] pr-1">
        <div className="mr-1.5 flex h-5 w-[22px] items-center justify-center border-r border-l border-[#d8d0d8]">
          <svg viewBox="0 0 16 16" className="size-4" aria-hidden="true">
            <circle cx="8" cy="8" r="7.200" fill="#10e818" stroke="#508050" />
            <path d="M4 5.500Q5 3 8 2.500" fill="none" stroke="#a0ffa0" strokeWidth="1.500" />
          </svg>
        </div>
        <svg viewBox="0 0 8 16" className="h-4 w-2" aria-hidden="true">
          <path d="M1.500 1h5L5.300 10H2.700Z" fill="#000" />
          <circle cx="4" cy="13.300" r="1.900" fill="#000" />
        </svg>
      </footer>
    </div>
  );
}
